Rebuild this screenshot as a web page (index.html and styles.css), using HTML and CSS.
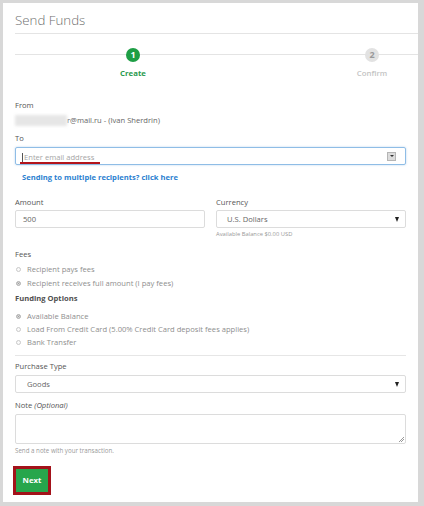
FILE: index.html
```html
<!DOCTYPE html>
<html>
<head>
<meta charset="utf-8">
<link rel="stylesheet" href="styles.css">
</head>
<body>
<div class="card">
  <div class="title">Send Funds</div>
  <div class="steps">
    <div class="step active"><span class="circle">1</span><span class="step-label">Create</span></div>
    <div class="step todo"><span class="circle">2</span><span class="step-label">Confirm</span></div>
  </div>
  <div class="form">
    <div class="label">From</div>
    <div class="from"><span class="blur"></span>r@mail.ru - (Ivan Sherdrin)</div>
    <div class="label mt6">To</div>
    <div class="field focus"><span class="ph"><span class="caret"></span>Enter email address</span><span class="ddbox"><span class="tri"></span></span></div>
    <div class="link">Sending to multiple recipients? click here</div>
    <div class="row">
      <div class="col">
        <div class="label">Amount</div>
        <div class="field mt2"><span class="val">500</span></div>
      </div>
      <div class="col">
        <div class="label">Currency</div>
        <div class="field select mt2"><span class="val wide">U.S. Dollars</span><span class="arrow"></span></div>
        <div class="hint">Available Balance $0.00 USD</div>
      </div>
    </div>
    <div class="label fees">Fees</div>
    <div class="radios r14">
      <div class="radio"><span class="dot"></span>Recipient pays fees</div>
      <div class="radio"><span class="dot on"></span>Recipient receives full amount (I pay fees)</div>
    </div>
    <div class="label bold">Funding Options</div>
    <div class="radios r13">
      <div class="radio"><span class="dot on"></span>Available Balance</div>
      <div class="radio"><span class="dot"></span>Load From Credit Card (5.00% Credit Card deposit fees applies)</div>
      <div class="radio"><span class="dot"></span>Bank Transfer</div>
    </div>
    <div class="label pt">Purchase Type</div>
    <div class="field select mt3"><span class="val goods">Goods</span><span class="arrow"></span></div>
    <div class="label mt6">Note <i>(Optional)</i></div>
    <div class="field area mt3"><span class="grip"></span></div>
    <div class="help">Send a note with your transaction.</div>
    <div class="btn-wrap"><span class="btn">Next</span></div>
  </div>
</div>
</body>
</html>
```
FILE: styles.css
```css
html, body { margin: 0; padding: 0; }
body {
  background: #d8d8d8;
  font-family: "Open Sans", "DejaVu Sans", sans-serif;
  width: 424px;
  height: 506px;
  overflow: hidden;
  padding: 3px 0 0 3px;
  box-sizing: border-box;
}
.card {
  background: #fff;
  width: 415px;
  height: 499px;
  box-sizing: border-box;
  padding-left: 12px;
}
.title {
  padding: 7px 0 3px;
  line-height: 20px;
  font-size: 13.3px;
  font-weight: 300;
  color: #6f6f6f;
  border-bottom: 1px solid #e4e4e4;
}
.steps {
  display: flex;
  padding-top: 14px;
  height: 45px;
  box-sizing: border-box;
  background: linear-gradient(#e4e4e4, #e4e4e4) no-repeat 0 20px / 100% 1px;
}
.step {
  width: 60px;
  display: flex;
  flex-direction: column;
  align-items: center;
}
.step.active { margin-left: 88px; }
.step.todo { margin-left: 179px; }
.circle {
  width: 14px; height: 14px;
  border-radius: 50%;
  font-size: 9px;
  font-weight: 700;
  line-height: 14px;
  text-align: center;
}
.active .circle { background: #1e9e45; color: #fff; }
.todo .circle { background: #e2e2e2; color: #9a9a9a; }
.step-label {
  margin-top: 5px;
  font-size: 7.8px;
  line-height: 12px;
  font-weight: 700;
}
.active .step-label { color: #2a9a4e; }
.todo .step-label { color: #c4c4c4; font-weight: 600; }

.form { width: 391px; padding-top: 20px; }
.label {
  font-size: 7.6px;
  line-height: 12px;
  color: #555;
}
.label i { font-style: italic; }
.mt6 { margin-top: 6px; }
.mt3 { margin-top: 3px; }
.mt2 { margin-top: 2px; }
.bold { font-weight: 700; margin-top: 2px; color: #505050; }
.from {
  margin-top: 3px;
  font-size: 7.6px;
  line-height: 12px;
  color: #666;
  display: flex;
  align-items: center;
}
.blur {
  display: inline-block;
  width: 52px;
  height: 11px;
  background: #e6e6e6;
  filter: blur(1.5px);
}
.field {
  height: 18px;
  box-sizing: border-box;
  border: 1px solid #dcdcdc;
  border-radius: 2px;
  display: flex;
  align-items: center;
  font-size: 7.6px;
  color: #666;
}
.field.focus {
  margin-top: 3px;
  border-color: #8fbde6;
  box-shadow: 0 0 2px rgba(100, 160, 220, 0.5);
  justify-content: space-between;
}
.ph {
  margin-left: 4px;
  padding: 0 6px 0 2px;
  color: #a5a5a5;
  border-bottom: 2px solid #b3141c;
  line-height: 10px;
  position: relative;
  top: 2px;
  display: flex;
  align-items: center;
}
.caret { width: 1px; height: 9px; background: #555; margin-right: 1px; }
.ddbox {
  width: 7px; height: 7px;
  margin-right: 9px;
  background: #dcdcdc;
  border: 1px solid #b5b5b5;
  display: flex;
  align-items: center;
  justify-content: center;
}
.tri {
  width: 0; height: 0;
  border-left: 2px solid transparent;
  border-right: 2px solid transparent;
  border-top: 2px solid #333;
}
.link {
  margin-top: 6px;
  padding-left: 7px;
  font-size: 7.6px;
  line-height: 12px;
  font-weight: 700;
  color: #2b7fd0;
}
.row {
  display: grid;
  grid-template-columns: 190px 190px;
  column-gap: 11px;
  margin-top: 13px;
}
.val { margin-left: 7px; }
.val.wide { margin-left: 10px; }
.val.goods { margin-left: 11px; }
.select { justify-content: space-between; }
.arrow {
  width: 0; height: 0;
  margin-right: 6px;
  border-left: 2.5px solid transparent;
  border-right: 2.5px solid transparent;
  border-top: 5px solid #222;
}
.hint {
  margin-top: 2px;
  font-size: 5.8px;
  line-height: 8px;
  color: #999;
}
.fees { margin-top: 10px; }
.radios { margin-top: 2px; }
.radios.r13 { margin-top: 6px; border-bottom: 1px solid #e6e6e6; padding-bottom: 6px; }
.radio {
  display: flex;
  align-items: center;
  font-size: 7.6px;
  color: #8e8e8e;
}
.r14 .radio { line-height: 14px; }
.r13 .radio { line-height: 13px; }
.dot {
  width: 5px; height: 5px;
  box-sizing: border-box;
  border: 1px solid #c8c8c8;
  border-radius: 50%;
  margin: 0 6px 0 1px;
  background: #fafafa;
}
.dot.on { background: #8a8a8a; border-color: #bbb; box-shadow: inset 0 0 0 1px #ddd; }
.pt { margin-top: 4px; }
.area {
  height: 30px;
  position: relative;
}
.grip {
  position: absolute;
  right: 1px; bottom: 1px;
  width: 5px; height: 5px;
  background: linear-gradient(135deg, transparent 45%, #999 45%, #999 55%, transparent 55%, transparent 70%, #999 70%, #999 80%, transparent 80%);
}
.help {
  margin-top: 3px;
  font-size: 6.2px;
  line-height: 8px;
  color: #9a9a9a;
}
.btn-wrap { margin-top: 11px; margin-left: -2px; }
.btn {
  display: inline-block;
  width: 32px;
  height: 23px;
  line-height: 23px;
  text-align: center;
  background: #27a64c;
  color: #fff;
  font-size: 7.8px;
  font-weight: 700;
  border: 3px solid #a3121a;
}
```
